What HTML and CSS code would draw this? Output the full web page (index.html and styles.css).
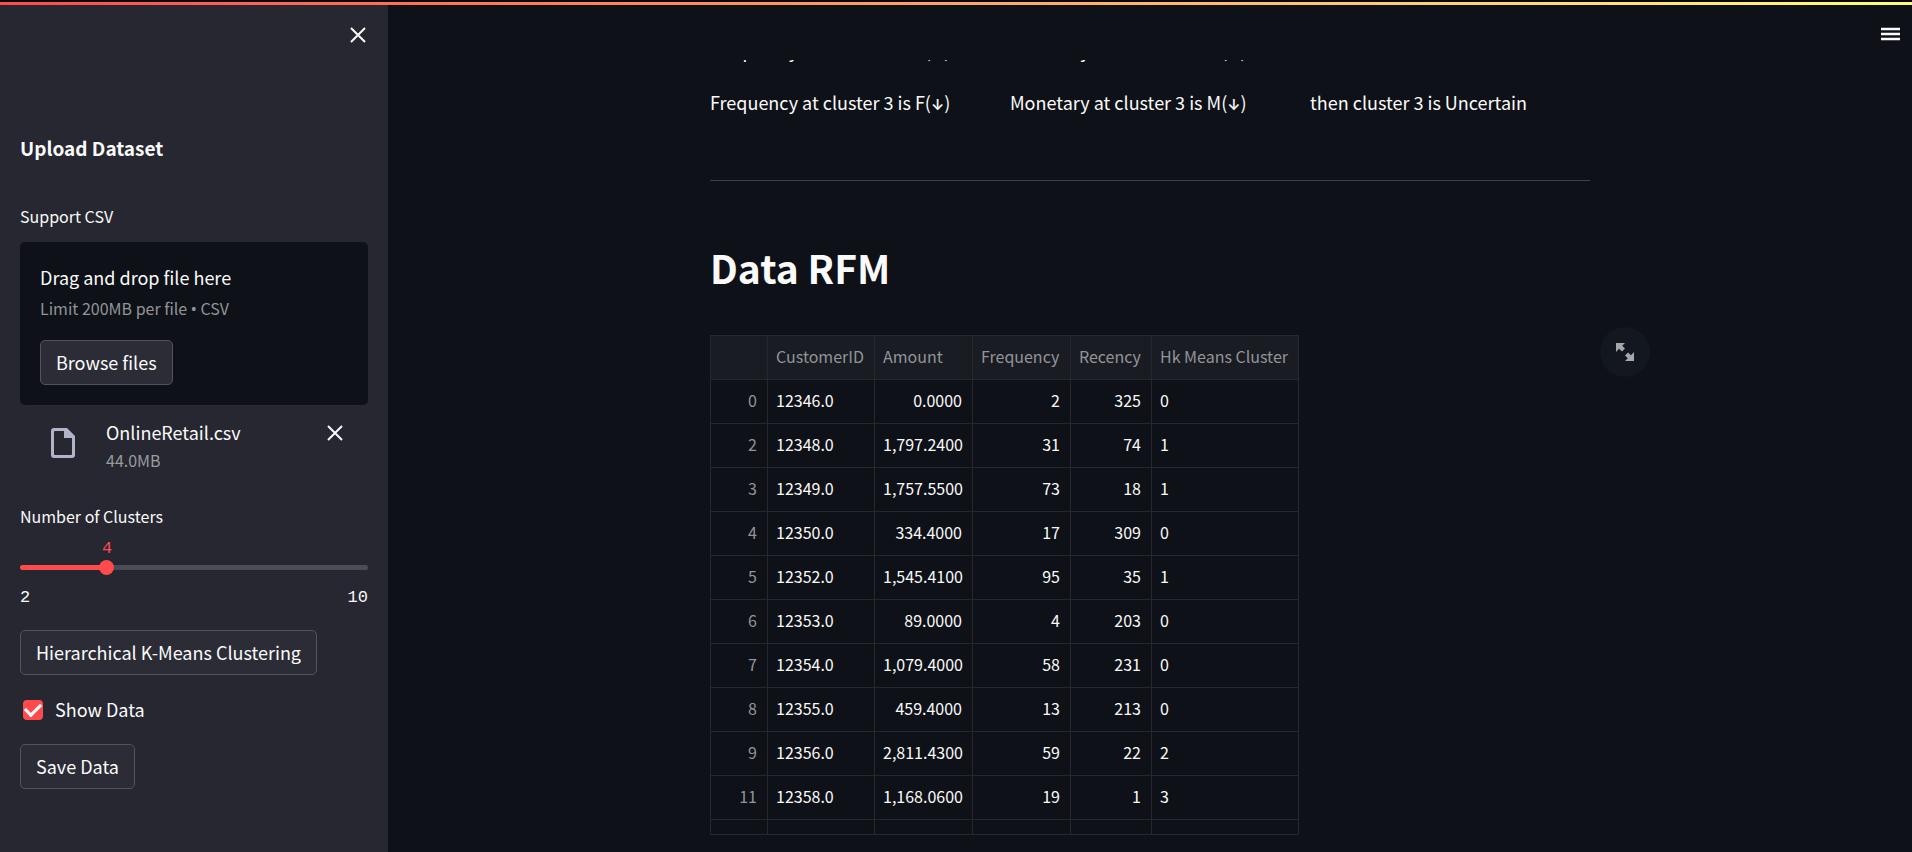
FILE: index.html
```html
<!DOCTYPE html>
<html lang="en">
<head>
<meta charset="utf-8">
<title>Data RFM</title>
<link rel="stylesheet" href="styles.css">
</head>
<body>
<div class="decoration"></div>
<div class="app">
  <aside class="sidebar">
    <button class="icon-button sidebar-close" aria-label="Close sidebar">
      <svg class="icon-cross" viewBox="0 0 16 16"><path d="M1 1l14 14M15 1L1 15"/></svg>
    </button>
    <h2 class="sidebar-title">Upload Dataset</h2>
    <section class="uploader">
      <p class="label">Support CSV</p>
      <div class="dropzone">
        <span class="drop-title">Drag and drop file here</span>
        <span class="drop-limit">Limit 200MB per file <span class="bullet">•</span> CSV</span>
        <button class="button">Browse files</button>
      </div>
      <div class="file">
        <svg class="icon-file" viewBox="0 0 24 30"><path fill-rule="evenodd" d="M3 0H16L24 8V27Q24 30 21 30H3Q0 30 0 27V3Q0 0 3 0ZM4 3Q3 3 3 4V26Q3 27 4 27H20Q21 27 21 26V10H13V3Z"/></svg>
        <div class="file-info">
          <span class="file-name">OnlineRetail.csv</span>
          <span class="file-size">44.0MB</span>
        </div>
        <button class="icon-button" aria-label="Remove file">
          <svg class="icon-cross" viewBox="0 0 16 16"><path d="M1 1l14 14M15 1L1 15"/></svg>
        </button>
      </div>
    </section>
    <section class="slider">
      <label class="label" for="clusters">Number of Clusters</label>
      <div class="slider-value"><output for="clusters">4</output></div>
      <div class="slider-track"><input id="clusters" type="range" min="2" max="10" value="4"></div>
      <div class="slider-range"><span>2</span><span>10</span></div>
    </section>
    <button class="button">Hierarchical K-Means Clustering</button>
    <label class="check"><input type="checkbox" checked>Show Data</label>
    <button class="button">Save Data</button>
  </aside>
  <main class="main">
    <header class="toolbar">
      <button class="icon-button" aria-label="Menu">
        <svg class="icon-menu" viewBox="0 0 20 14"><path d="M0 2h19M0 7h19M0 12h19"/></svg>
      </button>
    </header>
    <div class="content">
      <div class="rules">
        <p>Frequency at cluster 2 is F(<span class="arrow">↓</span>)</p>
        <p>Monetary at cluster 2 is M(<span class="arrow">↓</span>)</p>
        <p>then cluster 2 is Uncertain</p>
        <p>Frequency at cluster 3 is F(<span class="arrow">↓</span>)</p>
        <p>Monetary at cluster 3 is M(<span class="arrow">↓</span>)</p>
        <p>then cluster 3 is Uncertain</p>
      </div>
      <hr class="divider">
      <h1 class="heading">Data RFM</h1>
      <div class="dataframe">
        <table class="table">
          <colgroup><col class="col-index"><col class="col-id"><col class="col-amount"><col class="col-frequency"><col class="col-recency"><col class="col-cluster"></colgroup>
          <thead>
            <tr><th></th><th>CustomerID</th><th>Amount</th><th>Frequency</th><th>Recency</th><th>Hk Means Cluster</th></tr>
          </thead>
          <tbody>
            <tr><th>0</th><td>12346.0</td><td class="num">0.0000</td><td class="num">2</td><td class="num">325</td><td>0</td></tr>
            <tr><th>2</th><td>12348.0</td><td class="num">1,797.2400</td><td class="num">31</td><td class="num">74</td><td>1</td></tr>
            <tr><th>3</th><td>12349.0</td><td class="num">1,757.5500</td><td class="num">73</td><td class="num">18</td><td>1</td></tr>
            <tr><th>4</th><td>12350.0</td><td class="num">334.4000</td><td class="num">17</td><td class="num">309</td><td>0</td></tr>
            <tr><th>5</th><td>12352.0</td><td class="num">1,545.4100</td><td class="num">95</td><td class="num">35</td><td>1</td></tr>
            <tr><th>6</th><td>12353.0</td><td class="num">89.0000</td><td class="num">4</td><td class="num">203</td><td>0</td></tr>
            <tr><th>7</th><td>12354.0</td><td class="num">1,079.4000</td><td class="num">58</td><td class="num">231</td><td>0</td></tr>
            <tr><th>8</th><td>12355.0</td><td class="num">459.4000</td><td class="num">13</td><td class="num">213</td><td>0</td></tr>
            <tr><th>9</th><td>12356.0</td><td class="num">2,811.4300</td><td class="num">59</td><td class="num">22</td><td>2</td></tr>
            <tr><th>11</th><td>12358.0</td><td class="num">1,168.0600</td><td class="num">19</td><td class="num">1</td><td>3</td></tr>
            <tr class="row-cut"><th></th><td></td><td></td><td></td><td></td><td></td></tr>
          </tbody>
        </table>
        <button class="expand" aria-label="View fullscreen">
          <svg class="icon-expand" viewBox="0 0 18 18"><path d="M0 0H9L6.2 2.8L9 5.6L6 8.6L3 5.8L0 9ZM18 18H9L11.8 15.2L9 12.4L12 9.4L15 12.2L18 9Z"/></svg>
        </button>
      </div>
    </div>
  </main>
</div>
</body>
</html>
```
FILE: styles.css
```css
* { box-sizing: border-box; }

body {
  margin: 0;
  background: #0e1117;
  color: #fafafa;
  font: 18px/32px "Noto Sans CJK SC", "Noto Sans", sans-serif;
}

p, h1, h2 { margin: 0; }

button {
  font: inherit;
  color: inherit;
  cursor: pointer;
}

.decoration {
  position: absolute;
  z-index: 3;
  top: 0;
  left: 0;
  right: 0;
  height: 5px;
  border-top: 2px solid #0a070c;
  background: linear-gradient(90deg, #ff4b4b, #fffd80);
}

.app {
  display: flex;
  height: 100vh;
}

/* Sidebar */

.sidebar {
  flex: 0 0 388px;
  display: flex;
  flex-direction: column;
  align-items: flex-start;
  gap: 20px;
  padding: 20px;
  background: #262730;
}

.sidebar > section { align-self: stretch; }

.icon-button {
  display: flex;
  align-items: center;
  justify-content: center;
  width: 30px;
  height: 30px;
  padding: 0;
  border: 0;
  background: none;
}

.sidebar-close {
  align-self: flex-end;
  margin-right: -5px;
}

.icon-cross {
  width: 16px;
  height: 16px;
  fill: none;
  stroke: #fafafa;
  stroke-width: 2;
}

.sidebar-title {
  margin: 66px 0 24px;
  font-size: 19px;
  font-weight: 700;
  line-height: 24px;
}

.label {
  display: block;
  font-size: 16px;
  line-height: 24px;
}

.dropzone {
  display: flex;
  flex-direction: column;
  align-items: flex-start;
  margin-top: 14px;
  padding: 20px;
  border-radius: 5px;
  background: #0e1117;
}

.drop-title { line-height: 30px; }

.drop-limit {
  margin: 4px 0 20px;
  color: #92949a;
  font-size: 16px;
  line-height: 24px;
}

.bullet {
  font-family: "Noto Sans", sans-serif;
  line-height: 1;
}

.button {
  min-height: 45px;
  padding: 4px 15px 6px;
  border: 1px solid #52535b;
  border-radius: 5px;
  background: #2b2c36;
}

.file {
  display: flex;
  align-items: flex-start;
  margin-top: 13px;
  padding: 0 18px 0 31px;
  line-height: 28px;
}

.icon-file {
  width: 24px;
  height: 30px;
  margin-top: 10px;
  fill: #b1b3c8;
}

.file-info {
  flex: 1;
  display: flex;
  flex-direction: column;
  margin-left: 31px;
}

.file-size {
  color: #9a9b9f;
  font-size: 16px;
}

.slider { margin-top: 10px; }

.slider-value,
.slider-range {
  font: 17px/20px "Liberation Mono", monospace;
}

.slider-value {
  width: 50%;
  margin-top: 11px;
  color: #ff4b4b;
  text-align: center;
}

.slider-track {
  height: 16px;
  display: flex;
  align-items: center;
  position: relative;
}

.slider-track::before {
  content: "";
  flex: 1;
  height: 5px;
  border-radius: 3px;
  background: linear-gradient(90deg, #ff4b4b 25%, #4b4c56 25%);
}

.slider-track input {
  position: absolute;
  left: -8px;
  width: calc(100% + 16px);
  height: 16px;
  margin: 0;
  background: transparent;
  appearance: none;
}

.slider-track input::-webkit-slider-thumb {
  appearance: none;
  width: 15px;
  height: 15px;
  border-radius: 50%;
  background: #ff4b4b;
}

.slider-range {
  display: flex;
  justify-content: space-between;
  margin: 13px 0 2px;
}

.check {
  display: flex;
  align-items: center;
  gap: 12px;
  padding-left: 3px;
  line-height: 29px;
}

.check input {
  display: grid;
  place-items: center;
  width: 20px;
  height: 20px;
  margin: 0;
  border-radius: 4px;
  background: #ff4b4b;
  appearance: none;
}

.check input:checked::before {
  content: "";
  width: 13px;
  height: 7px;
  margin-bottom: 3px;
  border: solid #fafafa;
  border-width: 0 0 3px 3px;
  transform: rotate(-45deg);
}

/* Main area */

.main {
  position: relative;
  flex: 1;
  min-width: 0;
  overflow: hidden;
}

.toolbar {
  position: absolute;
  z-index: 2;
  top: 0;
  left: 0;
  right: 0;
  display: flex;
  justify-content: flex-end;
  height: 60px;
  padding: 19px 6px 0;
  background: #0e1117;
}

.icon-menu {
  width: 20px;
  height: 14px;
  fill: none;
  stroke: #fafafa;
  stroke-width: 2.4;
}

.content {
  max-width: 880px;
  margin: 0 auto;
  padding-top: 34px;
}

.rules {
  display: grid;
  grid-template-columns: repeat(3, 1fr);
  gap: 20px;
}

.arrow {
  font-family: Inter, sans-serif;
  font-size: 15px;
  font-weight: 600;
  line-height: 1;
}

.divider {
  height: 1px;
  margin: 62px 0;
  border: 0;
  background: #3f4146;
}

.heading {
  font-size: 39px;
  font-weight: 700;
  line-height: 48px;
}

.dataframe {
  position: relative;
  margin-top: 44px;
}

.table {
  border-collapse: collapse;
  table-layout: fixed;
  width: 588px;
  font-size: 16px;
  line-height: 22px;
}

.col-index { width: 57px; }
.col-id { width: 107px; }
.col-amount { width: 98px; }
.col-frequency { width: 98px; }
.col-recency { width: 81px; }
.col-cluster { width: 147px; }

.table tr { height: 44px; }

.table th,
.table td {
  padding: 0 10px 3px 8px;
  border: 1px solid #26282e;
  font-weight: 400;
  text-align: left;
  white-space: nowrap;
}

.table th { color: #92949a; }
.table thead th { background: #1a1c23; }
.table tbody th,
.table .num { text-align: right; }
.table .row-cut { height: 15px; }

.expand {
  position: absolute;
  top: -8px;
  right: -60px;
  display: grid;
  place-items: center;
  width: 50px;
  height: 50px;
  padding: 0;
  border: 0;
  border-radius: 50%;
  background: #131720;
}

.icon-expand {
  width: 18px;
  height: 18px;
  fill: #a6a7ab;
}
```
